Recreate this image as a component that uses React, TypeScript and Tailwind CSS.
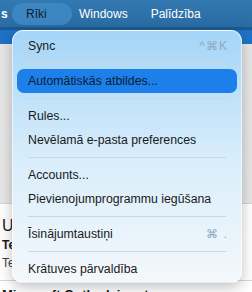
import { Fragment } from "react";

type Item = { label: string; shortcut?: string; active?: boolean; sepAfter?: boolean };

const items: Item[] = [
    { label: "Sync", shortcut: "^⌘K", sepAfter: true },
    { label: "Automātiskās atbildes...", active: true, sepAfter: true },
    { label: "Rules..." },
    { label: "Nevēlamā e-pasta preferences", sepAfter: true },
    { label: "Accounts..." },
    { label: "Pievienojumprogrammu iegūšana", sepAfter: true },
    { label: "Īsinājumtaustiņi", shortcut: "⌘ .", sepAfter: true },
    { label: "Krātuves pārvaldība" },
];

export default function App() {
    return <div className="relative w-[252px] h-[292px] overflow-hidden bg-white font-['Liberation_Sans',Arial,sans-serif]">
        {/* menu bar */}
        <div className="h-[27px] flex items-center bg-gradient-to-b from-[#3378b0] to-[#2a6ca4] text-[12px] text-white">
            <span className="font-bold w-[12px] pl-[1px]">s</span>
            <div className="h-[22px] w-[60px] rounded-full bg-[#3c86c2] flex items-center pl-[14px] text-[#0e1f30]">Rīki</div>
            <span className="ml-[7px]">Windows</span>
            <span className="ml-[23px]">Palīdzība</span>
        </div>
        <div className="h-[3px] bg-[#1b5a92]" />
        {/* window behind */}
        <div className="h-[14px] bg-[#1f72c6]" />
        <div className="h-[160px] bg-[#e6e6e6] border-b border-[#d4d4d4]" />
        <div className="h-[76px] bg-white flex flex-col pl-[2px] pt-[12px] text-[#1b1b1b]">
            <span className="text-[16px] leading-[20px]">U</span>
            <span className="text-[12px] font-bold leading-[18px]">Te</span>
            <span className="text-[12px] leading-[18px] text-[#444]">Te</span>
        </div>
        <div className="border-t border-[#d8d8d8] pl-[2px] pt-[4px] text-[13px] font-bold text-[#1b1b1b] whitespace-nowrap">Microsoft Outlook ir gatavs</div>

        {/* dropdown */}
        <div className="absolute left-[12px] top-[30px] w-[230px] rounded-[11px] border border-white/60 bg-gradient-to-b from-[#a4d5f7] via-[#d8edfb] to-[#f4f8fb] shadow-[0_4px_14px_rgba(0,0,0,0.25)] pt-[3px] pb-[1px] px-[4px] text-[12.3px] text-[#1a1a1a]">
            {items.map((it) => <Fragment key={it.label}>
                <div className={`h-[24px] flex items-center justify-between pl-[11px] pr-[9px] rounded-[7px] ${it.active ? "bg-[#1d7fe9] text-[#0b1e33]" : ""}`}>
                    <span>{it.label}</span>
                    {it.shortcut && <span className="text-[#8ea9bd] text-[12px] tracking-[1px]">{it.shortcut}</span>}
                </div>
                {it.sepAfter && <div className="h-[11px] flex items-center px-[11px]">
                    <div className="h-px w-full bg-[#c5d8e4]" />
                </div>}
            </Fragment>)}
        </div>
    </div>
}
